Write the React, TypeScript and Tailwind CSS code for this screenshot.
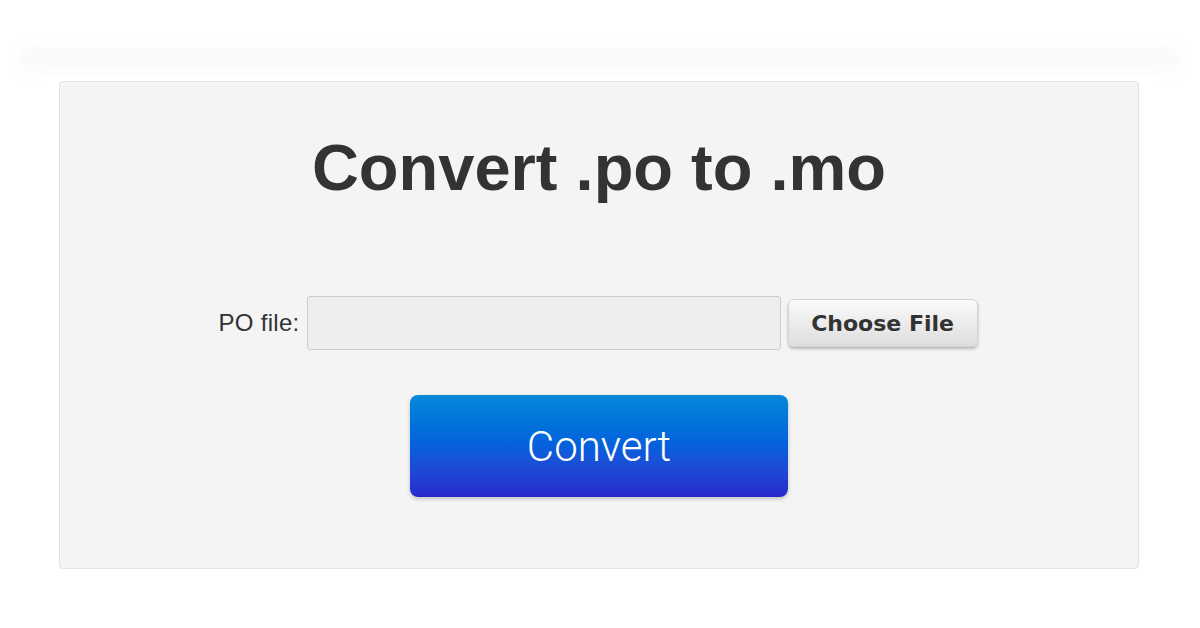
import React from "react";

export default function App() {
  return (
    <div className="w-[1200px] h-[628px] bg-white overflow-hidden" style={{ fontFamily: '"Liberation Sans", Arial, sans-serif' }}>
      <div className="pt-[46px] px-[20px]">
        <div className="h-[26px] rounded-[10px] bg-[#fafafa] blur-[6px]" />
      </div>
      <div className="ml-[59px] w-[1080px] mt-[9px] h-[488px] bg-[#f4f4f4] border border-[#e2e2e2] rounded-[4px] flex flex-col items-center">
        <h1 className="mt-[46px] text-[65px] leading-[80px] font-bold text-[#333333]">
          Convert .po to .mo
        </h1>
        <div className="mt-[88px] flex items-center pr-[2px]">
          <span className="text-[24px] text-[#333333] mr-[7px] tracking-[0.3px]">PO file:</span>
          <div className="w-[474px] h-[54px] bg-[#eeeeee] border border-[#cccccc] rounded-[3px]" />
          <button
            className="ml-[7px] w-[190px] h-[48px] rounded-[6px] bg-gradient-to-b from-[#fafafa] to-[#dedede] border border-[#d4d4d4] shadow-[0_2px_3px_rgba(0,0,0,0.25)] text-[22px] font-bold text-[#333333]"
            style={{ fontFamily: '"DejaVu Sans", Verdana, sans-serif' }}
          >
            Choose File
          </button>
        </div>
        <button
          className="mt-[45px] w-[378px] h-[102px] rounded-[8px] bg-gradient-to-b from-[#0888d8] via-[#0660dc] to-[#2828cc] shadow-[0_2px_4px_rgba(0,0,0,0.2)] text-white text-[42px] font-light"
          style={{ fontFamily: 'Roboto, "Liberation Sans", sans-serif' }}
        >
          Convert
        </button>
      </div>
    </div>
  );
}
